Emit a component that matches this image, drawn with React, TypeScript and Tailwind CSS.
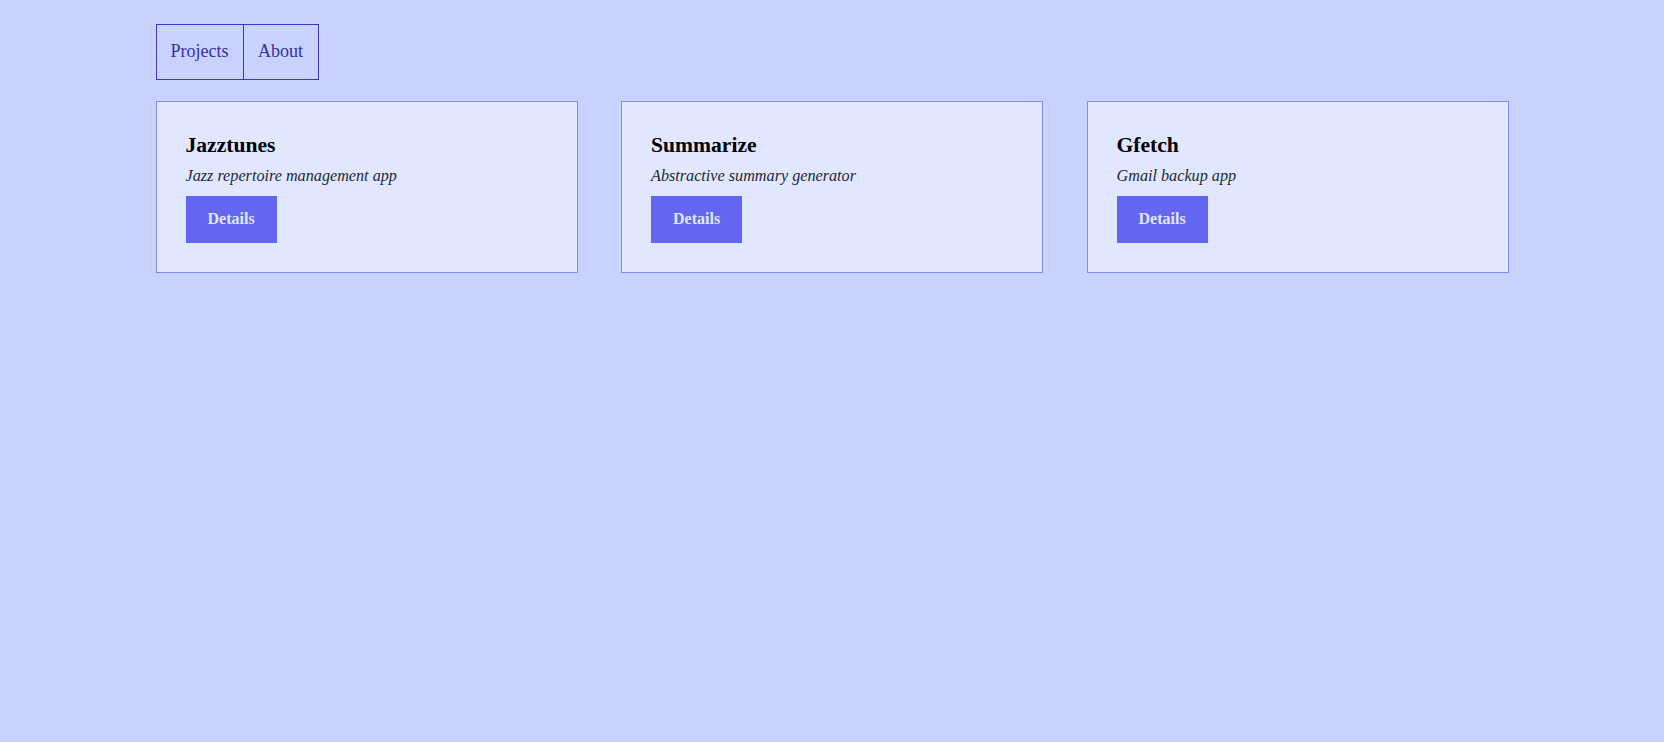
const projects = [
  { name: 'Jazztunes', blurb: 'Jazz repertoire management app' },
  { name: 'Summarize', blurb: 'Abstractive summary generator' },
  { name: 'Gfetch', blurb: 'Gmail backup app' },
]

function Nav() {
  return (
    <nav className="flex">
      <div className="flex border border-[#4338ca] text-[#3730a3] text-[18px]">
        <a className="px-[14px] pt-[13px] pb-[15px] leading-[26px] border-r border-[#4338ca]">Projects</a>
        <a className="px-[14.5px] pt-[13px] pb-[15px] leading-[26px]">About</a>
      </div>
    </nav>
  )
}

function Card({ name, blurb }: { name: string; blurb: string }) {
  return (
    <div className="border border-[#818cf8] bg-[#e0e7ff] pl-[29px] pr-[28px] pt-[31px] pb-[29px]">
      <h2 className="text-[21.6px] font-bold leading-[25px] text-black">{name}</h2>
      <p className="mt-[6.5px] italic text-[16.2px] leading-[22px] text-[#1e293b]">{blurb}</p>
      <button className="mt-[9px] bg-[#6366f1] text-[#e0e7ff] font-bold text-[16px] leading-[24px] px-[22px] py-[11.5px]">
        Details
      </button>
    </div>
  )
}

export default function App() {
  return (
    <div className="min-h-screen bg-[#c7d2fe] font-['Liberation_Serif',serif]">
      <div className="w-[1353px] mx-auto pt-[24px]">
        <Nav />
        <div className="grid grid-cols-3 gap-x-[43.5px] mt-[21px]">
          {projects.map(p => (
            <Card key={p.name} {...p} />
          ))}
        </div>
      </div>
    </div>
  )
}
